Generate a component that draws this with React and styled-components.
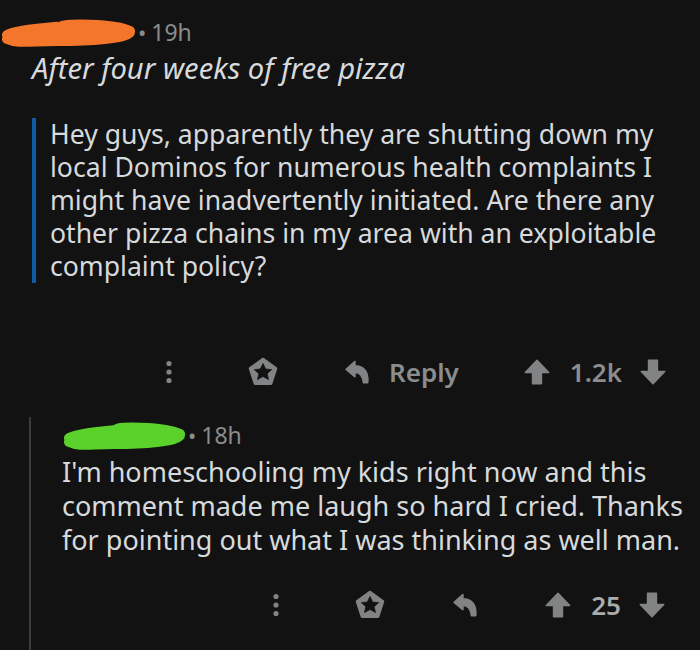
import styled, { createGlobalStyle } from 'styled-components';

const GlobalStyle = createGlobalStyle`
	html, body {
		margin: 0;
		background: #121212;
	}
	body {
		font-family: 'Noto Sans', 'Open Sans', sans-serif;
		color: #d7dadc;
	}
`;

const Page = styled.div`
	width: 700px;
	height: 650px;
	overflow: hidden;
	background: #121212;
	padding-top: 17px;
	box-sizing: border-box;
`;

const Meta = styled.div`
	display: flex;
	align-items: center;
	height: 30px;
	font-size: 23px;
	color: #8b8c8d;
`;

const Dot = styled.span`
	margin: 0 5px 0 2px;
	font-size: 22px;
`;

const Title = styled.div`
	margin: 3px 0 0 32px;
	font-size: 29.2px;
	font-style: italic;
	line-height: 36px;
	color: #d7dadc;
`;

const Quote = styled.blockquote`
	margin: 32px 0 0 32px;
	padding: 0;
	padding-left: 14px;
	border-left: 4px solid #0e5ba6;
	font-size: 26.6px;
	line-height: 33px;
`;

const Body = styled.div`
	margin-top: 5px;
	padding-right: 6px;
	font-size: 27px;
	line-height: 34px;
`;

const ActionBar = styled.div`
	display: flex;
	align-items: center;
	justify-content: flex-end;
	height: 40px;
	padding-right: ${(props) => props.right}px;
	margin-top: ${(props) => props.top}px;
	color: #818384;
`;

const Action = styled.div`
	display: flex;
	align-items: center;
	margin-left: ${(props) => props.gap}px;
	font-size: 26px;
	font-weight: 600;
	color: ${(props) => (props.light ? '#a9abad' : '#8b8c8d')};
`;

const Label = styled.span`
	margin-left: 19px;
`;

const Score = styled.span`
	margin: 0 18px 0 20px;
`;

const Thread = styled.div`
	margin: 25px 0 0 29px;
	padding: 3px 0 40px 31px;
	border-left: 2px solid #3a3b3c;
`;

const Scribble = ({ color, width }) => (
	<svg width={width} height="32" viewBox={`0 0 ${width} 32`}>
		<path
			d={`M7 19 C 24 11, 60 12, ${width * 0.45} 10 S ${width - 22} 7, ${width - 6} 15 C ${width - 4} 23, ${width * 0.62} 25, ${width * 0.42} 25 S 18 28, 7 23`}
			fill={color}
			stroke={color}
			strokeWidth="10"
			strokeLinejoin="round"
			strokeLinecap="round"
		/>
	</svg>
);

const Dots = () => (
	<svg width="8" height="26" viewBox="0 0 8 26">
		<circle cx="4" cy="4.5" r="2.6" fill="#818384" />
		<circle cx="4" cy="13" r="2.6" fill="#818384" />
		<circle cx="4" cy="21.5" r="2.6" fill="#818384" />
	</svg>
);

const Award = () => (
	<svg width="30" height="30" viewBox="0 0 24 24">
		<polygon
			points="12,1.8 22.2,9.2 18.3,21.2 5.7,21.2 1.8,9.2"
			fill="#818384"
			stroke="#818384"
			strokeWidth="2.4"
			strokeLinejoin="round"
		/>
		<polygon
			points="12,5.2 14.1,9.6 18.9,10.1 15.3,13.3 16.4,18 12,15.6 7.6,18 8.7,13.3 5.1,10.1 9.9,9.6"
			fill="#121212"
			stroke="#121212"
			strokeWidth="0.6"
			strokeLinejoin="round"
		/>
	</svg>
);

const ReplyIcon = () => (
	<svg width="26" height="26" viewBox="0 0 24 24">
		<path
			d="M10 2.5 L2 9.5 L10 16.2 V12.4 C14.6 12.4 17.2 15 18 21.8 L21.8 21.8 C22.8 12 18.4 6.4 10 6.4 Z"
			fill="#818384"
			stroke="#818384"
			strokeWidth="1.6"
			strokeLinejoin="round"
		/>
	</svg>
);

const Arrow = ({ down }) => (
	<svg
		width="26"
		height="26"
		viewBox="0 0 20 20"
		style={down ? { transform: 'rotate(180deg)' } : undefined}
	>
		<path
			d="M10 1 L19 10.4 H13.4 V19 H6.6 V10.4 H1 Z"
			fill="#818384"
			stroke="#818384"
			strokeWidth="1.2"
			strokeLinejoin="round"
		/>
	</svg>
);

const App = () => (
	<Page>
		<GlobalStyle />
		<Meta>
			<Scribble color="#f4762b" width="136" />
			<Dot>•</Dot>
			<span>19h</span>
		</Meta>
		<Title>After four weeks of free pizza</Title>
		<Quote>
			Hey guys, apparently they are shutting down my local Dominos for
			numerous health complaints I might have inadvertently initiated. Are
			there any other pizza chains in my area with an exploitable complaint
			policy?
		</Quote>
		<ActionBar top={69} right={34}>
			<Action gap={0}>
				<Dots />
			</Action>
			<Action gap={75}>
				<Award />
			</Action>
			<Action gap={66}>
				<ReplyIcon />
				<Label>Reply</Label>
			</Action>
			<Action gap={65}>
				<Arrow />
				<Score>1.2k</Score>
				<Arrow down />
			</Action>
		</ActionBar>
		<Thread>
			<Meta>
				<Scribble color="#5ad22b" width="124" />
				<Dot>•</Dot>
				<span>18h</span>
			</Meta>
			<Body>
				I'm homeschooling my kids right now and this comment made me laugh so
				hard I cried. Thanks for pointing out what I was thinking as well man.
			</Body>
			<ActionBar top={28} right={35}>
				<Action gap={0}>
					<Dots />
				</Action>
				<Action gap={75}>
					<Award />
				</Action>
				<Action gap={67}>
					<ReplyIcon />
				</Action>
				<Action gap={67} light>
					<Arrow />
					<Score>25</Score>
					<Arrow down />
				</Action>
			</ActionBar>
		</Thread>
	</Page>
);

export default App;
